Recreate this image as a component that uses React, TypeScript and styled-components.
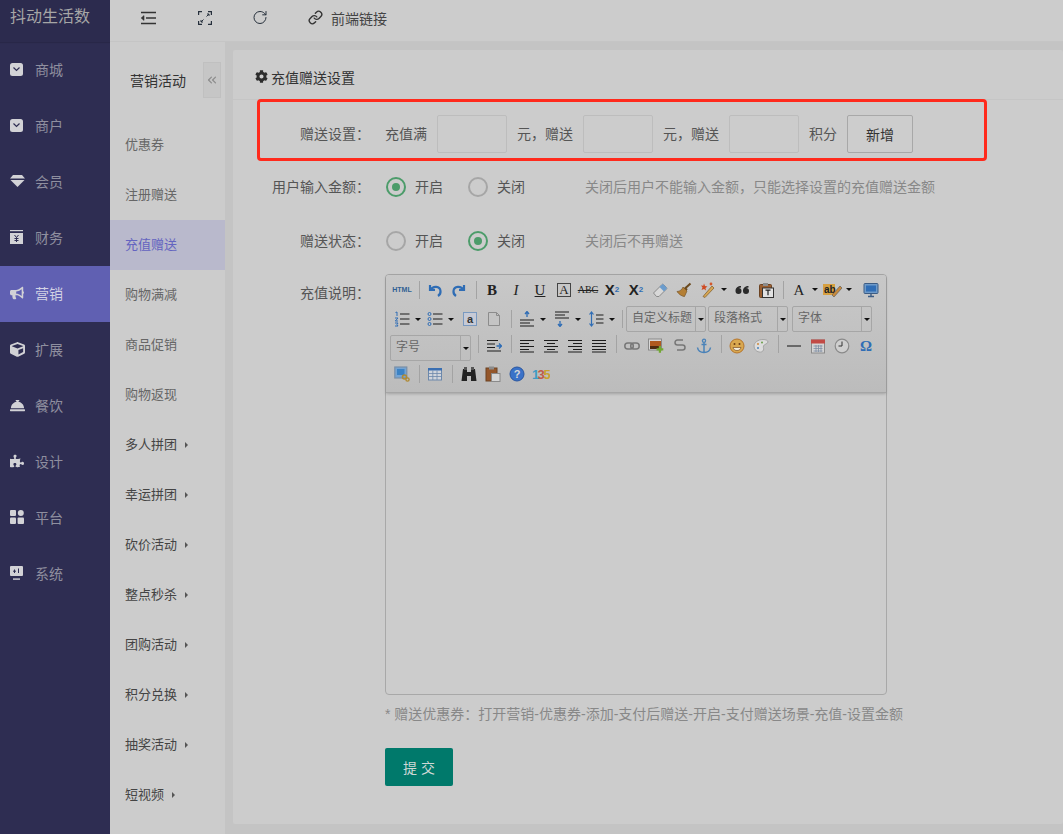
import React from "react";
import styled, { createGlobalStyle } from "styled-components";
import {
  FaBullhorn,
  FaCog,
  FaConciergeBell,
  FaCube,
  FaPuzzlePiece,
} from "react-icons/fa";
import { ChevronsLeft, Link, RotateCw } from "lucide-react";

const GlobalStyle = createGlobalStyle`
  html, body {
    margin: 0;
    padding: 0;
    height: 100%;
    overflow: hidden;
    background: #c4c4c4;
    font-family: "Liberation Sans", "Noto Sans CJK SC", sans-serif;
  }
  * { box-sizing: border-box; }
`;

/* sidebar icons */
const BagIcon = () => (
  <svg width="13" height="13" viewBox="0 0 13 13">
    <rect width="13" height="13" rx="2.5" fill="currentColor" />
    <path d="M3.5 4.500 6.500 7.500 9.500 4.500" fill="none" stroke="#2e2d52" strokeWidth="1.200" />
  </svg>
);

const GemIcon = () => (
  <svg width="15" height="12" viewBox="0 0 15 12" fill="currentColor">
    <path d="M3 0H12L15 3.500H0Z" />
    <path d="M.5 5H14.500L7.500 12Z" />
  </svg>
);

const MoneyIcon = () => (
  <svg width="13" height="14" viewBox="0 0 13 14">
    <rect y="0" width="13" height="1.200" fill="currentColor" />
    <rect y="3" width="13" height="11" fill="currentColor" />
    <path d="M4.500 5 6.500 7.500 8.500 5M6.500 7.500V12M4.500 8.500H8.500M4.500 10.500H8.500" fill="none" stroke="#2e2d52" strokeWidth="1" />
  </svg>
);

const GridIcon = () => (
  <svg width="14" height="14" viewBox="0 0 14 14" fill="currentColor">
    <rect width="6" height="6" rx="1" />
    <circle cx="10.800" cy="3" r="3" />
    <rect y="7.500" width="6" height="6.500" rx="1" />
    <rect x="7.600" y="7.500" width="6.400" height="6.500" rx="1" />
  </svg>
);

const ScreenIcon = () => (
  <svg width="13" height="14" viewBox="0 0 13 14">
    <rect width="13" height="10" rx="1" fill="currentColor" />
    <rect x="3" y="12.400" width="7" height="1.400" fill="currentColor" />
    <path d="M4.500 3.500V7M3 5.200H6M8.500 2.500V7" stroke="#2e2d52" strokeWidth="1" fill="none" />
  </svg>
);

/* top bar icons */
const OutdentIcon = () => (
  <svg width="16" height="14" viewBox="0 0 16 14" fill="none" stroke="#333" strokeWidth="1.400">
    <path d="M1 1.500H16M6 7H16M1 12.500H16" />
    <path d="M4 4.600 1.200 7 4 9.400Z" fill="#333" strokeWidth="0.600" />
  </svg>
);

const ExpandIcon = () => (
  <svg width="14" height="14" viewBox="0 0 14 14" fill="none" stroke="#26303c" strokeWidth="1.200">
    <path d="M.6 4V.6H4M10 .6h3.400V4M.6 10v3.400H4M10 13.400h3.400V10" />
    <path d="M8.500 5.500 11 3M9 3h2v2M5.500 8.500 3 11M5 11H3V9" strokeWidth="1" />
  </svg>
);

/* editor toolbar icons */
const Svg = ({ children, w = 16 }: { children: React.ReactNode; w?: number }) => (
  <svg width={w} height="16" viewBox={`0 0 ${w} 16`} fill="none">
    {children}
  </svg>
);

const blue = "#2f6db5";
const line = "#1c1c1c";

const ic: Record<string, React.ReactNode> = {
  undo: (
    <Svg>
      <path d="M3 3v5h5M3.500 8C6 3.500 13 4 13.500 9c.2 2-1 4-2.500 5" stroke={blue} strokeWidth="2.200" />
    </Svg>
  ),
  redo: (
    <Svg>
      <path d="M13 3v5H8M12.500 8C10 3.500 3 4 2.500 9c-.2 2 1 4 2.500 5" stroke={blue} strokeWidth="2.200" />
    </Svg>
  ),
  eraser: (
    <Svg>
      <path d="M1.500 11 10 2.500c.5-.5 1-.5 1.500 0l3 3c.5.5.5 1 0 1.500L7 14.500H4.500Z" fill="#d8d8d8" stroke="#8a8a8a" />
      <path d="M10 2.500c.5-.5 1-.5 1.500 0l3 3c.5.5.5 1 0 1.500L12 9.500 7.500 5Z" fill="#6b9ccd" />
    </Svg>
  ),
  brush: (
    <Svg>
      <path d="M9 6.500 14.500 1.500M8.500 5.500l2.500 2.500" stroke="#6b4a1e" strokeWidth="2" />
      <path d="M7 5 11 9 8.500 14.500C6 14.500 2.500 12 1 9.500 4 9.500 6 7.500 7 5Z" fill="#b47f35" stroke="#6b4a1e" strokeWidth=".6" />
    </Svg>
  ),
  wand: (
    <Svg>
      <path d="M3 14.500 12 4l2 2L5 15.500Z" fill="#d6a653" stroke="#7a5a2a" strokeWidth=".7" />
      <path d="M4 1.500 5 4l2.500.5L5.500 6 6 8.500 4 7 1.500 8 2.500 5.500 1 3.500 3.300 3.700Z" fill="#cf4a22" />
      <circle cx="11" cy="2" r="1.400" fill="#d4572a" />
    </Svg>
  ),
  quote: (
    <Svg>
      <path d="M7 4C4 4 1.500 5.500 1.500 9a3 3 0 1 0 3-3l2.500-.5ZM14.500 4c-3 0-5.500 1.500-5.500 5a3 3 0 1 0 3-3l2.500-.5Z" fill="#2a2a2a" />
    </Svg>
  ),
  pasteT: (
    <Svg>
      <rect x="1.500" y="2.500" width="12" height="13" rx="1" fill="#9a5e30" stroke="#6c4322" />
      <rect x="5" y="1" width="5" height="3" fill="#8c8c8c" />
      <rect x="4.500" y="6" width="11" height="9.500" fill="#e2e2e2" stroke="#333" />
      <path d="M7.500 8.200h5M10 8.200v5" stroke="#222" strokeWidth="1.200" />
    </Svg>
  ),
  pen: (
    <Svg w={20}>
      <rect x="0" y="2" width="12" height="11" fill="#d6a040" />
      <text x="1" y="11" fontFamily="Liberation Sans" fontSize="10" fontWeight="700" fill="#222">
        ab
      </text>
      <path d="M9 13 17 4l2 2-8 9Z" fill="#c88a3c" stroke="#555" strokeWidth=".6" />
    </Svg>
  ),
  monitor: (
    <Svg>
      <rect x="1" y="1.500" width="14" height="10" rx="1" fill="#6e9ac8" stroke="#3c5c84" />
      <rect x="3" y="3.500" width="10" height="6" fill="#2f6db5" />
      <path d="M5 14.500h6M8 11.500v3" stroke="#3c5c84" strokeWidth="1.400" />
    </Svg>
  ),
  ol: (
    <Svg>
      <path d="M6 3H15.500M6 8H15.500M6 13H15.500" stroke={line} strokeWidth="1.200" />
      <path d="M1.500 1.500 3 1V5M1 7h3L1.300 10H4M1 12h3l-1 1.500 1 1.500H1" stroke={blue} strokeWidth="1" />
    </Svg>
  ),
  ul: (
    <Svg>
      <path d="M6 3H15.500M6 8H15.500M6 13H15.500" stroke={line} strokeWidth="1.200" />
      <circle cx="2.500" cy="3" r="1.500" stroke={blue} />
      <circle cx="2.500" cy="8" r="1.500" stroke={blue} />
      <circle cx="2.500" cy="13" r="1.500" stroke={blue} />
    </Svg>
  ),
  aBox: (
    <Svg>
      <rect x="1.500" y="1.500" width="13" height="13" fill="#c6cad6" stroke={blue} strokeDasharray="1 1" />
      <text x="8" y="12" textAnchor="middle" fontFamily="Liberation Sans" fontSize="11" fontWeight="700" fill="#333">
        a
      </text>
    </Svg>
  ),
  page: (
    <Svg>
      <path d="M2.500 1.500h8l3 3v10h-11Z" fill="#c4c4c4" stroke="#8c8c8c" />
      <path d="M10.500 1.500v3h3" stroke="#8c8c8c" />
    </Svg>
  ),
  rowUp: (
    <Svg>
      <path d="M8 1v5M6 3l2-2.500L10 3" stroke={blue} strokeWidth="1.300" />
      <path d="M1 9H15M1 12H11M1 15H15" stroke={line} strokeWidth="1.200" />
    </Svg>
  ),
  rowDown: (
    <Svg>
      <path d="M1 1H15M1 4H11M1 7H15" stroke={line} strokeWidth="1.200" />
      <path d="M6 10v5M4 13l2 2.500L8 13" stroke={blue} strokeWidth="1.300" />
    </Svg>
  ),
  lineHeight: (
    <Svg>
      <path d="M3.500 1v14M1.500 3.500l2-2.500 2 2.500M1.500 12.500l2 2.500 2-2.500" stroke={blue} strokeWidth="1.200" />
      <path d="M8 4H15.500M8 8H15.500M8 12H15.500" stroke={line} strokeWidth="1.200" />
    </Svg>
  ),
  indent: (
    <Svg>
      <path d="M1 2.500H12M1 6H9M1 9.500H9M1 13H15" stroke={line} strokeWidth="1.200" />
      <path d="M10.500 8H15M13 5.500 15.500 8 13 10.500" stroke={blue} strokeWidth="1.300" />
    </Svg>
  ),
  left: (
    <Svg>
      <path d="M1 2.500H15M1 5.500H10M1 8.500H15M1 11.500H10M1 14H15" stroke={line} strokeWidth="1" />
    </Svg>
  ),
  center: (
    <Svg>
      <path d="M1 2.500H15M4 5.500H12M1 8.500H15M4 11.500H12M1 14H15" stroke={line} strokeWidth="1" />
    </Svg>
  ),
  right: (
    <Svg>
      <path d="M1 2.500H15M6 5.500H15M1 8.500H15M6 11.500H15M1 14H15" stroke={line} strokeWidth="1" />
    </Svg>
  ),
  justify: (
    <Svg>
      <path d="M1 2.500H15M1 5.500H15M1 8.500H15M1 11.500H15M1 14H15" stroke={line} strokeWidth="1" />
    </Svg>
  ),
  link: (
    <Svg>
      <rect x=".8" y="5" width="8.500" height="6" rx="3" stroke="#777" strokeWidth="1.500" />
      <rect x="6.700" y="5" width="8.500" height="6" rx="3" stroke="#777" strokeWidth="1.500" />
    </Svg>
  ),
  image: (
    <Svg>
      <rect x="0.500" y="1" width="13" height="11" fill="#d8d8d8" stroke="#8a8a8a" />
      <rect x="2" y="3" width="11" height="8" fill="#b05a1f" />
      <path d="M2 8h11v3H2Z" fill="#4f2b10" />
      <path d="M12 9h2.500V11.500H17V14H14.500V16.500H12V14H9.500V11.500H12Z" transform="scale(.9)" fill="#72a832" />
    </Svg>
  ),
  unlink: (
    <Svg>
      <path d="M11 2H5.500a2.500 2.500 0 0 0 0 5H10.500a2.500 2.500 0 0 1 0 5H5" stroke="#777" strokeWidth="1.500" />
    </Svg>
  ),
  anchor: (
    <Svg>
      <circle cx="8" cy="2.800" r="1.600" stroke="#4a82b8" strokeWidth="1.300" />
      <path d="M8 4.500V15M5.500 6.500h5M1.500 9.500c.5 3 3 5 6.500 5s6-2 6.500-5" stroke="#4a82b8" strokeWidth="1.500" />
    </Svg>
  ),
  smile: (
    <Svg>
      <circle cx="8" cy="8" r="7" fill="#d9a84f" stroke="#b5752c" />
      <circle cx="5.500" cy="6" r="1" fill="#6b3d16" />
      <circle cx="10.500" cy="6" r="1" fill="#6b3d16" />
      <path d="M4 9.500h8c-.5 2-2 3-4 3s-3.500-1-4-3Z" fill="#f3eddc" stroke="#6b3d16" strokeWidth=".6" />
    </Svg>
  ),
  palette: (
    <Svg>
      <path d="M1 8c0-3.500 4-6.500 9-6.500 3 0 5 1 5 2.500 0 2-4 2-4.500 4-.5 2 .5 2.500 0 4-.5 1.500-2.500 2.500-4.500 2-3-.5-5-3-5-6Z" fill="#dcdcdc" stroke="#a5a5a5" />
      <circle cx="5" cy="6" r="1" fill="#cf8a3a" />
      <circle cx="9" cy="4.500" r="1" fill="#6ba04a" />
      <circle cx="5" cy="10" r="1" fill="#4a82b8" />
    </Svg>
  ),
  hr: (
    <Svg>
      <path d="M1 8H15" stroke="#111" strokeWidth="1" />
    </Svg>
  ),
  calendar: (
    <Svg>
      <rect x="1.500" y="2" width="13" height="13" fill="#d4d4d4" stroke="#8a8a8a" />
      <rect x="1" y="1.500" width="14" height="4" fill="#c24a45" />
      <path d="M3.500 8h9M3.500 10.500h9M3.500 13h9M6 7v7M8.500 7v7M11 7v7" stroke="#7d8ea3" strokeWidth=".8" />
    </Svg>
  ),
  clock: (
    <Svg>
      <circle cx="8" cy="8" r="6.800" fill="#cfcfcf" stroke="#8a8a8a" strokeWidth="1.200" />
      <path d="M8 3.500V8H4.500" stroke="#333" />
    </Svg>
  ),
  preview: (
    <Svg>
      <rect x=".8" y="1" width="12" height="11" fill="#74a4d4" stroke="#7a8fa6" strokeWidth="1.200" />
      <rect x="3" y="3" width="7.500" height="6" fill="#3b82c4" />
      <circle cx="10.500" cy="11" r="2" stroke="#b08a32" strokeWidth="1.500" />
      <circle cx="13.500" cy="13.500" r="1.600" stroke="#b08a32" strokeWidth="1.400" />
    </Svg>
  ),
  table: (
    <Svg>
      <rect x="1.500" y="2.500" width="13" height="11.500" fill="#d0d4dc" stroke="#6c88ab" />
      <rect x="1" y="2" width="14" height="2.500" fill="#3a6fb2" />
      <path d="M2 7.500h12M2 10.500h12M5.800 4.500V14M10 4.500V14" stroke="#6c88ab" strokeWidth=".8" />
    </Svg>
  ),
  binoculars: (
    <Svg>
      <path d="M2 3h4v3h4V3h4l1.500 12H10V10H6v5H.5Z" fill="#222" />
      <rect x="3" y="1" width="3" height="3" fill="#555" />
      <rect x="10" y="1" width="3" height="3" fill="#555" />
    </Svg>
  ),
  paste: (
    <Svg>
      <rect x="1" y="2" width="11" height="13" fill="#94562a" stroke="#6c4322" />
      <rect x="4" y=".5" width="5" height="3" fill="#8c8c8c" />
      <rect x="6.500" y="7.500" width="8.500" height="8" fill="#d5d5d5" stroke="#8a8a8a" />
    </Svg>
  ),
  help: (
    <Svg>
      <circle cx="8" cy="8" r="7" fill="#3a72c8" stroke="#2a56a0" />
      <text x="8" y="12" textAnchor="middle" fontFamily="Liberation Sans" fontSize="11" fontWeight="700" fill="#d8d8d8">
        ?
      </text>
    </Svg>
  ),
  n135: (
    <Svg w={18}>
      <text x="0" y="13" fontFamily="Liberation Sans" fontSize="13" fontWeight="700" fill="#3f9bc4">
        1
      </text>
      <text x="5.500" y="13" fontFamily="Liberation Sans" fontSize="13" fontWeight="700" fill="#c0594a">
        3
      </text>
      <text x="11.500" y="13" fontFamily="Liberation Sans" fontSize="13" fontWeight="700" fill="#c9a02f">
        5
      </text>
    </Svg>
  ),
};

const menu = [
  { name: "商城", icon: <BagIcon /> },
  { name: "商户", icon: <BagIcon /> },
  { name: "会员", icon: <GemIcon /> },
  { name: "财务", icon: <MoneyIcon /> },
  { name: "营销", icon: <FaBullhorn size={14} />, active: true },
  { name: "扩展", icon: <FaCube size={15} /> },
  { name: "餐饮", icon: <FaConciergeBell size={15} /> },
  { name: "设计", icon: <FaPuzzlePiece size={14} /> },
  { name: "平台", icon: <GridIcon /> },
  { name: "系统", icon: <ScreenIcon /> },
];

const subMenu = [
  { name: "优惠券" },
  { name: "注册赠送" },
  { name: "充值赠送", active: true },
  { name: "购物满减" },
  { name: "商品促销" },
  { name: "购物返现" },
  { name: "多人拼团", more: true },
  { name: "幸运拼团", more: true },
  { name: "砍价活动", more: true },
  { name: "整点秒杀", more: true },
  { name: "团购活动", more: true },
  { name: "积分兑换", more: true },
  { name: "抽奖活动", more: true },
  { name: "短视频", more: true },
];

const Tool = ({ name, drop, mr }: { name: string; drop?: boolean; mr?: number }) => (
  <ToolBtn $drop={drop} $mr={mr}>
    <ToolIcon>{ic[name]}</ToolIcon>
    {drop && <Caret />}
  </ToolBtn>
);

const Letter = ({ children, drop, mr, $font, $boxed }: any) => (
  <ToolBtn $drop={drop} $mr={mr}>
    <ToolIcon>
      <LetterGlyph $font={$font} $boxed={$boxed}>
        {children}
      </LetterGlyph>
    </ToolIcon>
    {drop && <Caret />}
  </ToolBtn>
);

const Radio = ({ on, label }: { on?: boolean; label: string }) => (
  <RadioItem>
    <RadioCircle $on={on} />
    <RowText>{label}</RowText>
  </RadioItem>
);

const App = () => {
  return (
    <Page>
      <GlobalStyle />
      <Sidebar>
        <Logo>抖动生活数</Logo>
        {menu.map((item) => (
          <MenuItem key={item.name} $active={item.active}>
            <MenuIcon>{item.icon}</MenuIcon>
            {item.name}
          </MenuItem>
        ))}
      </Sidebar>

      <Main>
        <TopBar>
          <TopIcon>
            <OutdentIcon />
          </TopIcon>
          <TopIcon>
            <ExpandIcon />
          </TopIcon>
          <TopIcon $tight>
            <RotateCw size={17} strokeWidth={1.5} color="#26303c" />
          </TopIcon>
          <TopLink>
            <Link size={15} strokeWidth={2.2} color="#333" />
            前端链接
          </TopLink>
        </TopBar>

        <Body>
          <SubNav>
            <SubTitle>
              营销活动
              <Collapse>
                <ChevronsLeft size={14} color="#8b8b8b" />
              </Collapse>
            </SubTitle>
            {subMenu.map((item) => (
              <SubItem key={item.name} $active={item.active} $more={item.more}>
                {item.name}
              </SubItem>
            ))}
          </SubNav>

          <Content>
            <Card>
              <CardHeader>
                <FaCog size={13} color="#2c2c2c" />
                充值赠送设置
              </CardHeader>
              <Annotation />
              <Form>
                <FormRow>
                  <Label>赠送设置：</Label>
                  <Field>
                    <RowText>充值满</RowText>
                    <SmallInput />
                    <RowText>元，赠送</RowText>
                    <SmallInput />
                    <RowText>元，赠送</RowText>
                    <SmallInput />
                    <RowText>积分</RowText>
                    <AddButton>新增</AddButton>
                  </Field>
                </FormRow>

                <FormRow $after={16}>
                  <Label>用户输入金额：</Label>
                  <Radio on label="开启" />
                  <Radio label="关闭" />
                  <Hint>关闭后用户不能输入金额，只能选择设置的充值赠送金额</Hint>
                </FormRow>

                <FormRow $after={14}>
                  <Label>赠送状态：</Label>
                  <Radio label="开启" />
                  <Radio on label="关闭" />
                  <Hint>关闭后不再赠送</Hint>
                </FormRow>

                <EditorRow>
                  <Label>充值说明：</Label>
                  <div>
                    <Editor>
                      <Toolbar>
                        <ToolRow $h={27}>
                          <ToolBtn>
                            <HtmlGlyph>HTML</HtmlGlyph>
                          </ToolBtn>
                          <Sep />
                          <Tool name="undo" />
                          <Tool name="redo" />
                          <Sep />
                          <Letter $font="bold">B</Letter>
                          <Letter $font="italic">I</Letter>
                          <Letter $font="under">U</Letter>
                          <Letter $boxed>A</Letter>
                          <Letter $font="strike">ABC</Letter>
                          <Letter $font="sup">
                            X<sup>2</sup>
                          </Letter>
                          <Letter $font="sub">
                            X<sub>2</sub>
                          </Letter>
                          <Tool name="eraser" />
                          <Tool name="brush" />
                          <Tool name="wand" drop mr={2} />
                          <Tool name="quote" />
                          <Tool name="pasteT" />
                          <Sep />
                          <Letter drop mr={2}>
                            A
                          </Letter>
                          <Tool name="pen" drop mr={6} />
                          <Tool name="monitor" />
                        </ToolRow>

                        <ToolRow $h={32}>
                          <Tool name="ol" drop mr={1} />
                          <Tool name="ul" drop mr={3} />
                          <Tool name="aBox" />
                          <Tool name="page" />
                          <Sep $w={9} />
                          <Tool name="rowUp" drop mr={3} />
                          <Tool name="rowDown" drop mr={2} />
                          <Tool name="lineHeight" drop mr={2} />
                          <Sep $w={8} />
                          <Select $w={80}>自定义标题</Select>
                          <Select $w={80}>段落格式</Select>
                          <Select $w={80} $ml={2}>
                            字体
                          </Select>
                        </ToolRow>

                        <ToolRow $h={26} $top>
                          <Select $w={81}>字号</Select>
                          <Sep $w={9} />
                          <Tool name="indent" />
                          <Sep $w={9} />
                          <Tool name="left" />
                          <Tool name="center" />
                          <Tool name="right" />
                          <Tool name="justify" />
                          <Sep $w={9} />
                          <Tool name="link" />
                          <Tool name="image" />
                          <Tool name="unlink" />
                          <Tool name="anchor" />
                          <Sep />
                          <Tool name="smile" />
                          <Tool name="palette" />
                          <Sep />
                          <Tool name="hr" />
                          <Tool name="calendar" />
                          <Tool name="clock" />
                          <Letter $font="omega">Ω</Letter>
                        </ToolRow>

                        <ToolRow $h={26}>
                          <Tool name="preview" />
                          <Sep />
                          <Tool name="table" />
                          <Sep $w={10} />
                          <Tool name="binoculars" />
                          <Tool name="paste" />
                          <Tool name="help" />
                          <Tool name="n135" />
                        </ToolRow>
                      </Toolbar>
                    </Editor>
                    <Note>* 赠送优惠券：打开营销-优惠券-添加-支付后赠送-开启-支付赠送场景-充值-设置金额</Note>
                    <SubmitButton>提 交</SubmitButton>
                  </div>
                </EditorRow>
              </Form>
            </Card>
          </Content>
        </Body>
      </Main>
    </Page>
  );
};

const Page = styled.div`
  display: flex;
  height: 100vh;
  overflow: hidden;
`;

const Sidebar = styled.aside`
  flex: 0 0 110px;
  background: #2e2d52;
`;

const Logo = styled.div`
  height: 42px;
  padding-left: 10px;
  line-height: 34px;
  font-size: 16px;
  color: #a6a6a6;
  background: #2c2b4e;
  box-shadow: 0 1px 1px rgba(0, 0, 0, 0.12);
`;

const MenuItem = styled.div<{ $active?: boolean }>`
  display: flex;
  align-items: center;
  height: 56px;
  padding: 0 0 2px 10px;
  font-size: 14px;
  color: ${({ $active }) => ($active ? "#d2d2e4" : "#8f8f9f")};
  background: ${({ $active }) => ($active ? "#6060b2" : "transparent")};
`;

const MenuIcon = styled.span`
  display: flex;
  align-items: center;
  justify-content: flex-start;
  width: 25px;
  color: #d2d2d6;
`;

const Main = styled.div`
  flex: 1;
  min-width: 0;
  display: flex;
  flex-direction: column;
`;

const TopBar = styled.header`
  display: flex;
  align-items: center;
  flex: 0 0 42px;
  padding: 0 0 6px 30px;
  background: #cccccc;
  border-bottom: 1px solid #c5c5c5;
`;

const TopIcon = styled.span<{ $tight?: boolean }>`
  display: flex;
  align-items: center;
  justify-content: center;
  width: 16px;
  margin-right: 41px;
  ${({ $tight }) => $tight && "margin-left: -2px;"}
`;

const TopLink = styled.span`
  display: flex;
  align-items: center;
  gap: 8px;
  margin-left: -1px;
  font-size: 14px;
  color: #444;
`;

const Body = styled.div`
  flex: 1;
  display: flex;
  min-height: 0;
`;

const SubNav = styled.nav`
  flex: 0 0 115px;
  background: #cccccc;
`;

const SubTitle = styled.div`
  position: relative;
  height: 78px;
  padding: 30px 0 0 20px;
  font-size: 14px;
  line-height: 18px;
  color: #333;
`;

const Collapse = styled.span`
  position: absolute;
  top: 20px;
  right: 4px;
  display: flex;
  align-items: center;
  justify-content: center;
  width: 18px;
  height: 36px;
  background: #c6c6c6;
  border: 1px solid #c0c0c0;
`;

const SubItem = styled.div<{ $active?: boolean; $more?: boolean }>`
  display: flex;
  align-items: center;
  height: 50px;
  padding: 0 0 4px 15px;
  font-size: 13px;
  color: ${({ $active, $more }) => ($active ? "#6464c0" : $more ? "#444" : "#666")};
  background: ${({ $active }) => ($active ? "#b9b9cc" : "transparent")};
  ${({ $more }) =>
    $more &&
    `&::after {
      content: "";
      margin: 4px 0 0 8px;
      border-left: 3px solid #555;
      border-top: 3px solid transparent;
      border-bottom: 3px solid transparent;
    }`}
`;

const Content = styled.main`
  flex: 1;
  min-width: 0;
  padding: 8px 0 10px 8px;
  background: #c4c4c4;
`;

const Card = styled.section`
  position: relative;
  height: 100%;
  background: #cccccc;
  border-radius: 2px;
`;

const CardHeader = styled.div`
  display: flex;
  align-items: center;
  gap: 3px;
  height: 50px;
  padding: 4px 0 0 22px;
  font-size: 14px;
  color: #333;
  border-bottom: 1px solid #c5c5c5;
`;

const Annotation = styled.div`
  position: absolute;
  left: 24px;
  top: 49px;
  width: 730px;
  height: 62px;
  border: 3px solid #ff2a1c;
  border-radius: 4px;
  pointer-events: none;
`;

const Form = styled.div`
  padding-top: 15px;
`;

const FormRow = styled.div<{ $after?: number }>`
  display: flex;
  align-items: center;
  height: 38px;
  margin-bottom: ${({ $after }) => $after ?? 15}px;
  font-size: 14px;
  color: #555;
`;

const EditorRow = styled.div`
  display: flex;
  align-items: flex-start;
  font-size: 14px;
  color: #555;
`;

const Label = styled.label`
  flex: 0 0 137px;
  text-align: right;
  line-height: 38px;
  margin-right: 15px;
  font-size: 14px;
  color: #555;
`;

const Field = styled.div`
  display: flex;
  align-items: center;
  gap: 10px;
`;

const RowText = styled.span`
  margin-bottom: 2px;
`;

const SmallInput = styled.input`
  width: 70px;
  height: 38px;
  padding: 0 8px;
  background: #cccccc;
  border: 1px solid #bdbdbd;
  border-radius: 2px;
  outline: none;
`;

const AddButton = styled.button`
  width: 66px;
  height: 38px;
  padding: 0;
  font: inherit;
  color: #333;
  background: #cdcdcd;
  border: 1px solid #a8a8a8;
  border-radius: 2px;
`;

const RadioItem = styled.span`
  display: flex;
  align-items: center;
  gap: 9px;
  margin-right: 24px;
  margin-left: 1px;
  width: 57px;
  white-space: nowrap;
`;

const RadioCircle = styled.i<{ $on?: boolean }>`
  position: relative;
  flex: 0 0 20px;
  height: 20px;
  border-radius: 50%;
  border: 2px solid ${({ $on }) => ($on ? "#4c9c6a" : "#a6a6a6")};
  ${({ $on }) =>
    $on &&
    `&::after {
      content: "";
      position: absolute;
      inset: 4px;
      border-radius: 50%;
      background: #4c9c6a;
    }`}
`;

const Hint = styled.span`
  margin: 0 0 2px 36px;
  color: #888;
`;

const Editor = styled.div`
  width: 502px;
  height: 421px;
  background: #cccccc;
  border: 1px solid #a8a8a8;
  border-radius: 4px;
`;

const Toolbar = styled.div`
  height: 118px;
  padding: 1px 0 0 4px;
  background: linear-gradient(#c8c8c8, #bcbcbc);
  border-bottom: 1px solid #a6a6a6;
  border-radius: 3px 3px 0 0;
  box-shadow: 0 1px 3px rgba(0, 0, 0, 0.2);
`;

const ToolRow = styled.div<{ $h: number; $top?: boolean }>`
  display: flex;
  align-items: ${({ $top }) => ($top ? "flex-start" : "center")};
  height: ${({ $h }) => $h}px;
`;

const ToolBtn = styled.span<{ $drop?: boolean; $mr?: number }>`
  display: flex;
  align-items: center;
  flex: 0 0 auto;
  width: ${({ $drop }) => ($drop ? 32 : 24)}px;
  height: 22px;
  margin-right: ${({ $mr }) => $mr ?? 0}px;
`;

const ToolIcon = styled.span`
  display: flex;
  align-items: center;
  justify-content: center;
  width: 24px;
  height: 22px;
  overflow: visible;
`;

const fontStyles: Record<string, string> = {
  bold: "font-weight: 700;",
  italic: "font-style: italic;",
  under: "text-decoration: underline;",
  strike: "text-decoration: line-through; font-size: 10px;",
  sup: "font-family: 'Liberation Sans', sans-serif; font-weight: 700;",
  sub: "font-family: 'Liberation Sans', sans-serif; font-weight: 700;",
  omega: "color: #2f6db5; font-weight: 700;",
};

const LetterGlyph = styled.span<{ $font?: string; $boxed?: boolean }>`
  display: inline-flex;
  align-items: center;
  justify-content: center;
  font-family: "Liberation Serif", serif;
  font-size: 15px;
  line-height: 14px;
  color: #222;
  ${({ $font }) => ($font ? fontStyles[$font] : "")}
  ${({ $boxed }) =>
    $boxed &&
    `width: 14px; height: 14px; border: 1px solid #444; font-size: 13px;`}

  sup, sub {
    font-size: 8px;
    line-height: 0;
    color: #2f6db5;
  }
`;

const HtmlGlyph = styled.span`
  display: block;
  width: 24px;
  text-align: center;
  font-size: 7px;
  font-weight: 700;
  color: #2f5f94;
`;

const Caret = styled.i`
  margin-left: 1px;
  border-top: 3px solid #111;
  border-left: 3px solid transparent;
  border-right: 3px solid transparent;
`;

const Sep = styled.span<{ $w?: number }>`
  position: relative;
  flex: 0 0 ${({ $w }) => $w ?? 9}px;
  height: 18px;
  &::after {
    content: "";
    position: absolute;
    left: 50%;
    top: 0;
    bottom: 0;
    width: 1px;
    background: #a3a3a3;
  }
`;

const Select = styled.span<{ $w: number; $ml?: number }>`
  position: relative;
  flex: 0 0 ${({ $w }) => $w}px;
  height: 26px;
  margin-left: ${({ $ml }) => $ml ?? 0}px;
  margin-right: 2px;
  padding-left: 5px;
  line-height: 22px;
  font-size: 12px;
  color: #666;
  border: 1px solid #a6a6a6;
  border-radius: 2px;
  &::before {
    content: "";
    position: absolute;
    right: 9px;
    top: 0;
    bottom: 0;
    width: 1px;
    background: #a6a6a6;
  }
  &::after {
    content: "";
    position: absolute;
    right: 1px;
    top: 11px;
    border-top: 3px solid #111;
    border-left: 3px solid transparent;
    border-right: 3px solid transparent;
  }
`;

const Note = styled.div`
  margin-top: 10px;
  line-height: 19px;
  font-size: 14px;
  color: #888;
`;

const SubmitButton = styled.button`
  display: block;
  width: 68px;
  height: 38px;
  margin-top: 24px;
  font: inherit;
  font-size: 14px;
  color: #cfd8d6;
  background: #00796b;
  border: 0;
  border-radius: 2px;
`;

export default App;
